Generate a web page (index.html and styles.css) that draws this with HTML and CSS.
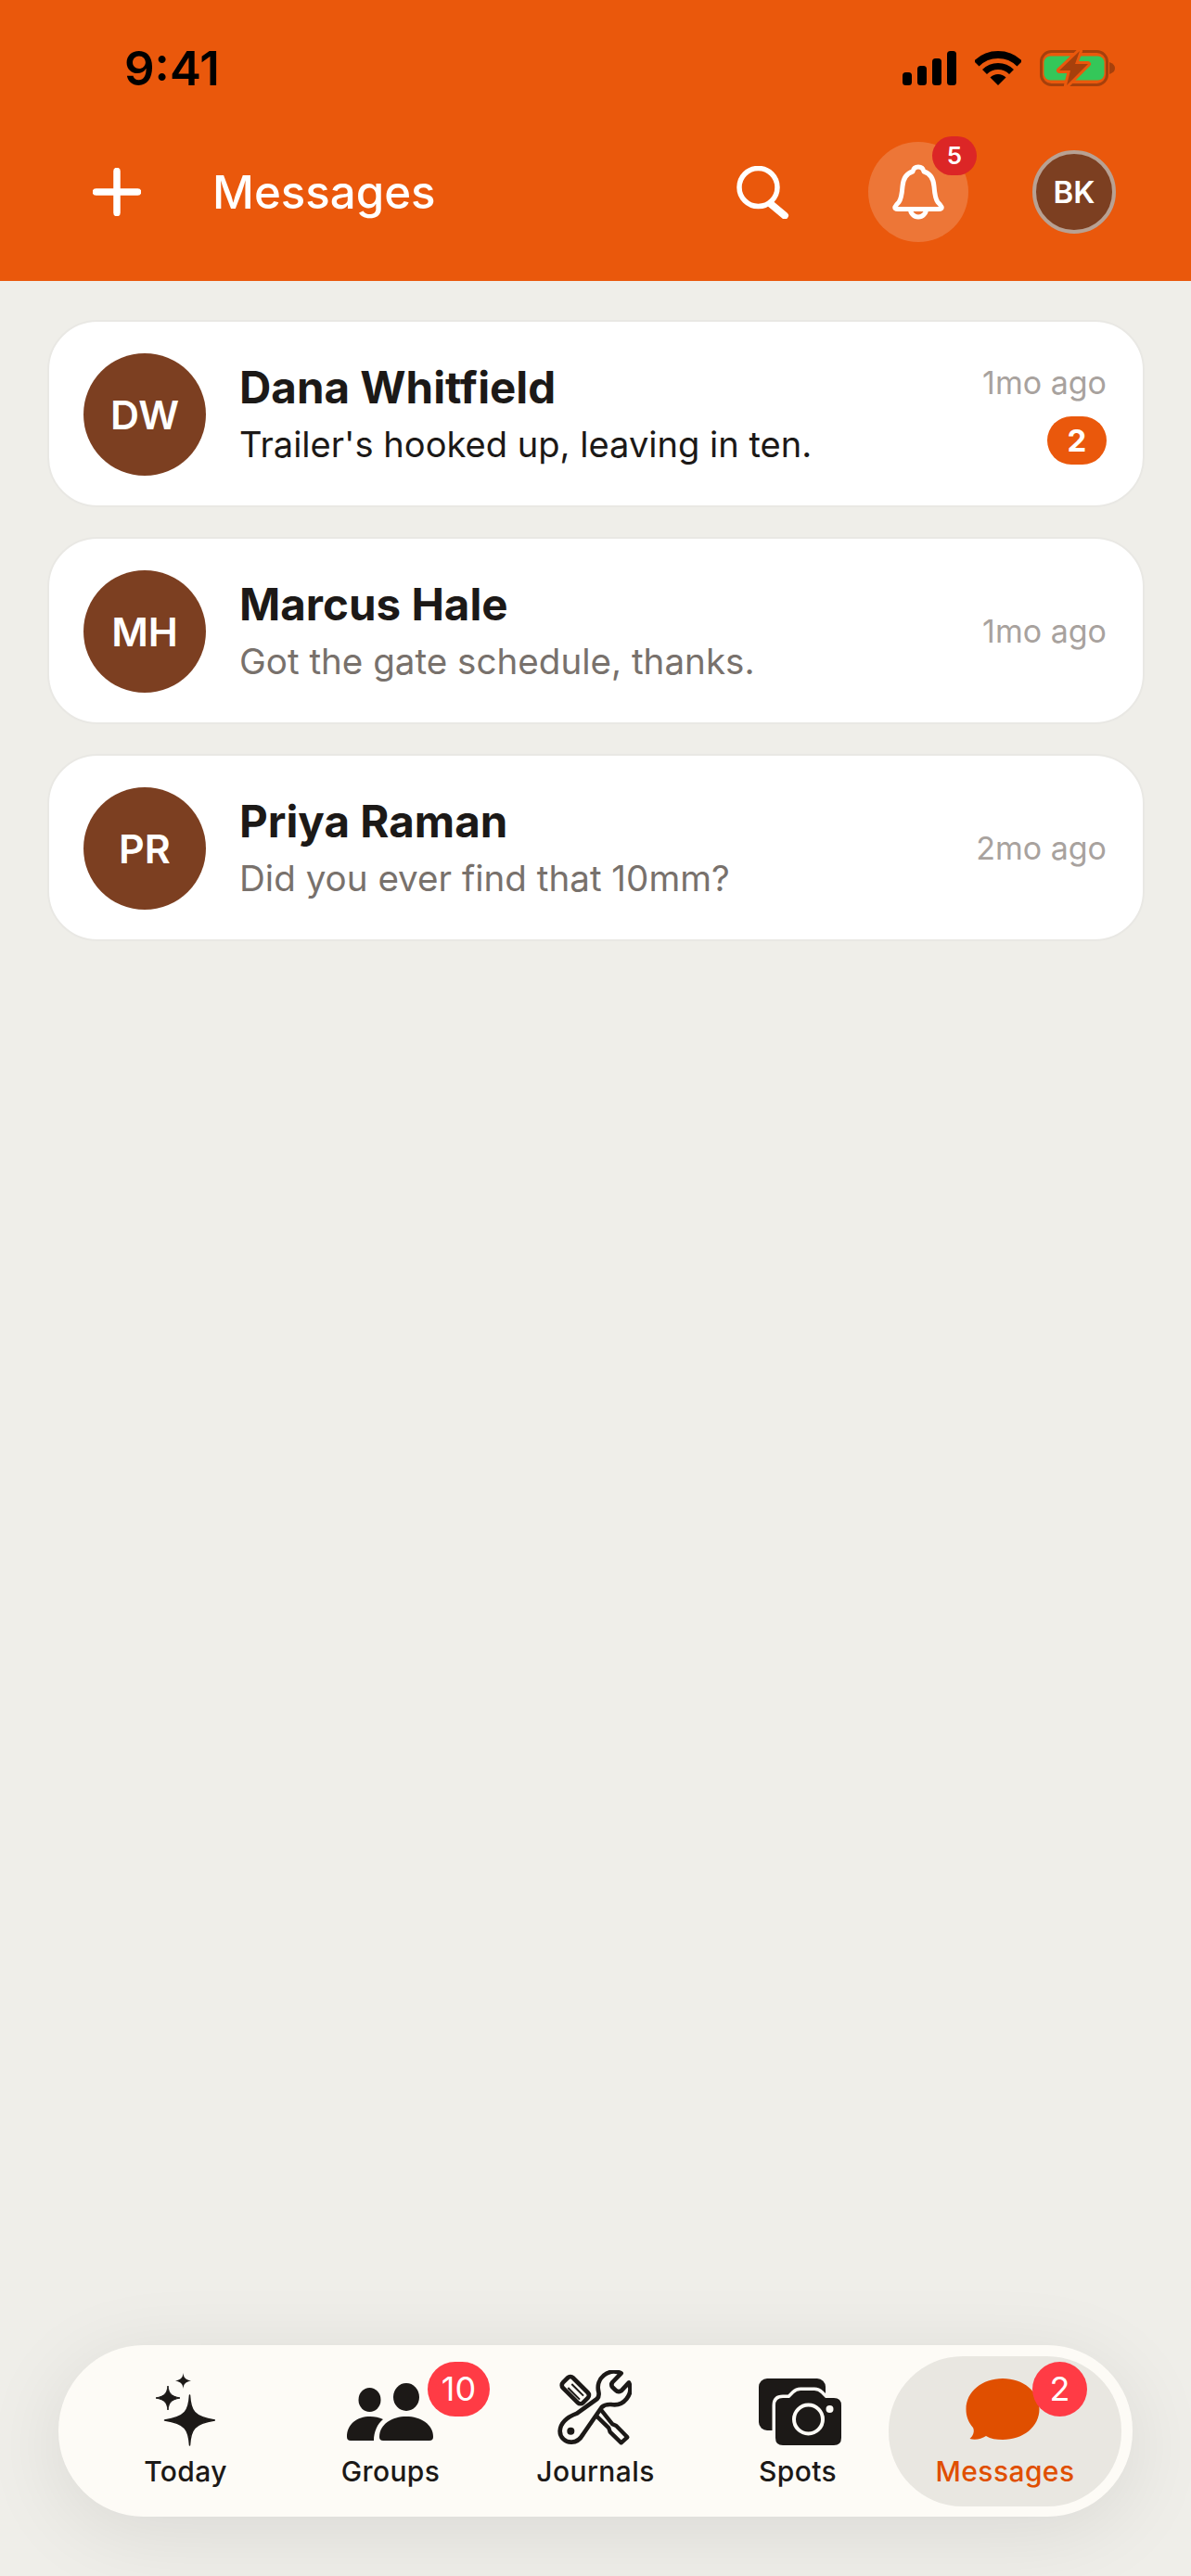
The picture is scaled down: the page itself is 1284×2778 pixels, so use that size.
FILE: index.html
```html
<!DOCTYPE html>
<html lang="en">
<head>
  <meta charset="UTF-8">
  <meta name="viewport" content="width=device-width, initial-scale=1.0">
  <title>Messages</title>
  <link rel="stylesheet" href="styles.css">
</head>
<body>
  <header class="header">
    <div class="status">
      <span class="clock">9:41</span>
      <div class="status-icons">
        <svg width="58" height="37" viewBox="0 0 58 37">
          <rect x="0" y="23" width="10" height="14" rx="3.5"/>
          <rect x="16" y="16" width="10" height="21" rx="3.5"/>
          <rect x="32" y="8" width="10" height="29" rx="3.5"/>
          <rect x="48" y="0" width="10" height="37" rx="3.5"/>
        </svg>
        <svg width="50" height="37" viewBox="0 0 50 37">
          <path d="M1.7 13.7A33 33 0 0 1 48.3 13.7" fill="none" stroke="#000" stroke-width="8"/>
          <path d="M10.5 22.5A20.5 20.5 0 0 1 39.5 22.5" fill="none" stroke="#000" stroke-width="7"/>
          <path d="M25 37L16.5 28.5A12 12 0 0 1 33.5 28.5Z"/>
        </svg>
        <svg width="81" height="39" viewBox="0 0 81 39">
          <rect x="1.5" y="1.5" width="71" height="36" rx="11" fill="none" stroke="#a6400c" stroke-width="3"/>
          <rect x="4.5" y="6.5" width="65" height="26" rx="7" fill="#34c759"/>
          <path d="M75 13Q81 15 81 19.5Q81 24 75 26Z" fill="#a6400c"/>
          <path d="M43 1L21 22H33L29 38L52 15H38Z" fill="#a6400c" stroke="#ea580c" stroke-width="6" stroke-linejoin="round" paint-order="stroke"/>
        </svg>
      </div>
    </div>
    <div class="topbar">
      <svg class="plus" width="52" height="52" viewBox="0 0 52 52">
        <path d="M26 3.5V48.5M3.5 26H48.5" fill="none" stroke="#fff" stroke-width="7.5" stroke-linecap="round"/>
      </svg>
      <h1 class="title">Messages</h1>
      <div class="actions">
        <svg class="search" width="57" height="57" viewBox="0 0 57 57">
          <circle cx="23.5" cy="23" r="20.5" fill="none" stroke="#fff" stroke-width="5.5"/>
          <path d="M37 41L52 53.5" fill="none" stroke="#fff" stroke-width="8" stroke-linecap="round"/>
        </svg>
        <div class="bell">
          <svg width="56" height="60" viewBox="0 0 56 60">
            <path d="M28 3Q33 3 34 8Q44 11 45 24Q46 37 49 41Q52 44 53 46Q54 48.5 50 48.5H6Q2 48.5 3 46Q4 44 7 41Q10 37 11 24Q12 11 22 8Q23 3 28 3Z" fill="none" stroke="#fff" stroke-width="5" stroke-linejoin="round"/>
            <path d="M19.5 48.5A8.5 8.5 0 0 0 36.5 48.5" fill="none" stroke="#fff" stroke-width="5"/>
          </svg>
          <span class="bell-count">5</span>
        </div>
        <div class="me">BK</div>
      </div>
    </div>
  </header>

  <main class="list">
    <div class="card">
      <div class="avatar">DW</div>
      <div class="card-text">
        <div class="name">Dana Whitfield</div>
        <div class="preview unread">Trailer's hooked up, leaving in ten.</div>
      </div>
      <div class="meta">
        <span class="time">1mo ago</span>
        <span class="unread-count">2</span>
      </div>
    </div>
    <div class="card">
      <div class="avatar">MH</div>
      <div class="card-text">
        <div class="name">Marcus Hale</div>
        <div class="preview">Got the gate schedule, thanks.</div>
      </div>
      <div class="meta">
        <span class="time">1mo ago</span>
      </div>
    </div>
    <div class="card">
      <div class="avatar">PR</div>
      <div class="card-text">
        <div class="name">Priya Raman</div>
        <div class="preview">Did you ever find that 10mm?</div>
      </div>
      <div class="meta">
        <span class="time">2mo ago</span>
      </div>
    </div>
  </main>

  <nav class="tabs">
    <div class="tab tab-today">
      <div class="tab-icon">
        <svg width="64" height="84" viewBox="0 0 64 84" fill="#1c1917">
          <path d="M36.500 27C37.500 44 41 50.500 63.500 54C41 57.500 37.500 64 36.500 81C35.500 64 32 57.500 9.500 54C32 50.500 35.500 44 36.500 27Z" stroke="#1c1917" stroke-width="1.500" stroke-linejoin="round"/>
          <path d="M13 17C14 25 16 28 26 30C16 32 14 35 13 43C12 35 10 32 0 30C10 28 12 25 13 17Z" stroke="#1c1917" stroke-linejoin="round"/>
          <path d="M29.500 3C30 8 31.500 10 38 11.500C31.500 13 30 15 29.500 20C29 15 27.500 13 21 11.500C27.500 10 29 8 29.500 3Z"/>
        </svg>
      </div>
      <span class="tab-label">Today</span>
    </div>
    <div class="tab tab-groups">
      <div class="tab-icon">
        <svg width="96" height="84" viewBox="0 0 96 84" fill="#1c1917">
          <ellipse cx="25.500" cy="32" rx="12" ry="13"/>
          <ellipse cx="65" cy="29" rx="14" ry="15"/>
          <path d="M1 72C1 58 12 50 26 50C31 50 36 51 40 53C34 58 30 66 30 76H5Q1 76 1 72Z"/>
          <path d="M36 72C36 58 50 50 65 50C80 50 94 58 94 72Q94 76 90 76H40Q36 76 36 72Z"/>
        </svg>
      </div>
      <span class="tab-label">Groups</span>
      <span class="count count-groups">10</span>
    </div>
    <div class="tab tab-journals">
      <div class="tab-icon icon-journals">
        <svg width="84" height="82" viewBox="50 65 252 246">
          <rect x="-46" y="-23" width="92" height="46" rx="12" transform="translate(120 130) rotate(45)" fill="none" stroke="#1c1917" stroke-width="14"/>
          <path d="M96 122L134 160M108 110L146 148" fill="none" stroke="#1c1917" stroke-width="6"/>
          <path d="M200 190L240 240L252 245L288 282L268 300L232 265L228 252L185 210" fill="#fdfbf6" stroke="#1c1917" stroke-width="13" stroke-linejoin="round"/>
          <path d="M268 75A52 52 0 0 0 195 135Q198 150 190 158L125 205Q72 225 70 262A36 36 0 0 0 108 298Q130 298 145 272L205 185Q215 175 235 176A52 52 0 0 0 293 105L268 132Q258 138 250 130L240 120Q234 112 240 104Z" fill="#fdfbf6" stroke="#1c1917" stroke-width="14" stroke-linejoin="round"/>
          <circle cx="105" cy="262" r="12" fill="#1c1917"/>
        </svg>
      </div>
      <span class="tab-label">Journals</span>
    </div>
    <div class="tab tab-spots">
      <div class="tab-icon icon-spots">
        <svg width="90" height="84" viewBox="0 0 90 84">
          <rect x="0" y="9" width="72" height="56" rx="9" fill="#1c1917"/>
          <path d="M26 30H33L38 25Q41 22 45 22H60Q64 22 67 25L72 30H81Q89 30 89 38V73Q89 81 81 81H26Q18 81 18 73V38Q18 30 26 30Z" fill="#1c1917" stroke="#fdfbf6" stroke-width="7" paint-order="stroke"/>
          <circle cx="53.500" cy="53" r="15.500" fill="#1c1917" stroke="#fdfbf6" stroke-width="4"/>
          <circle cx="76.500" cy="42" r="4" fill="#fdfbf6"/>
        </svg>
      </div>
      <span class="tab-label">Spots</span>
    </div>
    <div class="tab tab-messages">
      <div class="tab-icon icon-messages">
        <svg width="80" height="84" viewBox="0 0 80 84">
          <path d="M40 9C62 9 79.500 23 79.500 42C79.500 61 62 75 40 75C33 75 27 74 22 71C17 74.500 10 75.500 4.500 74C8 71 10 66 8 62C3 56 0.500 50 0.500 42C0.500 23 18 9 40 9Z" fill="#e04f00"/>
        </svg>
      </div>
      <span class="tab-label">Messages</span>
      <span class="count count-messages">2</span>
    </div>
  </nav>
</body>
</html>
```

FILE: styles.css
```css
body {
  font-family: Inter, "Noto Sans", sans-serif;
  margin: 0;
  width: 1284px;
  height: 2778px;
  overflow: hidden;
  display: flex;
  flex-direction: column;
  background-color: #efeee9;
  color: #1c1917;
}

/* header */

.header {
  height: 303px;
  background-color: #ea580c;
}

.status {
  height: 146px;
  padding: 0 82px 0 134px;
  display: flex;
  justify-content: space-between;
  align-items: center;
}

.clock {
  font-size: 51px;
  font-weight: 600;
  color: #000;
}

.status-icons {
  display: flex;
  align-items: center;
  gap: 20px;
}

.topbar {
  height: 122px;
  padding: 0 81px 0 100px;
  display: flex;
  align-items: center;
}

.title {
  margin: 0 0 0 77px;
  font-size: 49.200px;
  font-weight: 500;
  color: #fff;
}

.actions {
  margin-left: auto;
  display: flex;
  align-items: center;
}

.search {
  margin-right: 85px;
}

.bell {
  position: relative;
  width: 108px;
  height: 108px;
  margin-right: 69px;
  border-radius: 50%;
  background-color: rgba(255, 255, 255, 0.18);
  display: flex;
  justify-content: center;
  align-items: center;
}

.bell-count {
  position: absolute;
  top: -6px;
  right: -9px;
  width: 48px;
  height: 42px;
  border-radius: 21px;
  background-color: #dc2626;
  color: #fff;
  font-size: 26px;
  font-weight: 600;
  line-height: 42px;
  text-align: center;
}

.me {
  width: 90px;
  height: 90px;
  box-sizing: border-box;
  border: 4px solid #b8a193;
  border-radius: 50%;
  background-color: #7c3f21;
  color: #fff;
  font-size: 33px;
  font-weight: 600;
  line-height: 82px;
  text-align: center;
}

/* conversation list */

.list {
  flex: 1;
  padding: 42px 50px 0 51px;
  display: flex;
  flex-direction: column;
  gap: 32px;
}

.card {
  height: 202px;
  box-sizing: border-box;
  padding: 2px 39px 0 37px;
  border: 2px solid #e9e8e4;
  border-radius: 54px;
  background-color: #fff;
  display: flex;
  align-items: center;
}

.avatar {
  width: 132px;
  height: 132px;
  flex-shrink: 0;
  margin-right: 36px;
  border-radius: 50%;
  background-color: #7c3f21;
  color: #fff;
  font-size: 43px;
  font-weight: 600;
  line-height: 132px;
  text-align: center;
}

.card-text {
  flex: 1;
  margin-top: -1px;
  display: flex;
  flex-direction: column;
  gap: 9px;
}

.name {
  font-size: 47.500px;
  font-weight: 700;
  line-height: 56px;
}

.preview {
  font-size: 38.600px;
  line-height: 48px;
  color: #78716c;
}

.preview.unread {
  font-size: 38.100px;
  color: #1c1917;
}

.meta {
  display: flex;
  flex-direction: column;
  align-items: flex-end;
  gap: 16px;
}

.time {
  font-size: 34px;
  line-height: 40px;
  color: #a8a29e;
}

.unread-count {
  width: 64px;
  height: 52px;
  border-radius: 26px;
  background-color: #ea580c;
  color: #fff;
  font-size: 33px;
  font-weight: 700;
  line-height: 52px;
  text-align: center;
}

/* tab bar */

.tabs {
  height: 185px;
  box-sizing: border-box;
  margin: 0 63px 64px;
  padding: 12px 12px 11px;
  border-radius: 92px;
  background-color: #fdfbf6;
  box-shadow: 0 16px 90px rgba(0, 0, 0, 0.09);
  display: flex;
}

.tab {
  position: relative;
  padding-top: 15px;
  border-radius: 80px;
  display: flex;
  flex-direction: column;
  align-items: center;
}

.tab-today { width: 250px; }
.tab-groups { width: 192px; }
.tab-journals { width: 250px; }
.tab-spots { width: 186px; margin-right: 5px; }
.tab-messages { width: 251px; background-color: #e9e7e1; color: #e04f00; }

.tab-icon {
  height: 84px;
  display: flex;
  justify-content: center;
}

.icon-journals {
  margin-right: 6px;
}

.icon-spots {
  margin-left: 6px;
}

.icon-messages {
  margin-right: 5px;
}

.tab-label {
  margin-top: 7px;
  font-size: 30px;
  font-weight: 450;
  letter-spacing: 0.4px;
  line-height: 36px;
}

.count {
  position: absolute;
  top: 6px;
  height: 59px;
  border-radius: 30px;
  background-color: #ff3b45;
  color: #fff;
  font-size: 36px;
  line-height: 59px;
  text-align: center;
}

.count-groups {
  left: 136px;
  width: 67px;
}

.count-messages {
  left: 155px;
  width: 59px;
}
```
